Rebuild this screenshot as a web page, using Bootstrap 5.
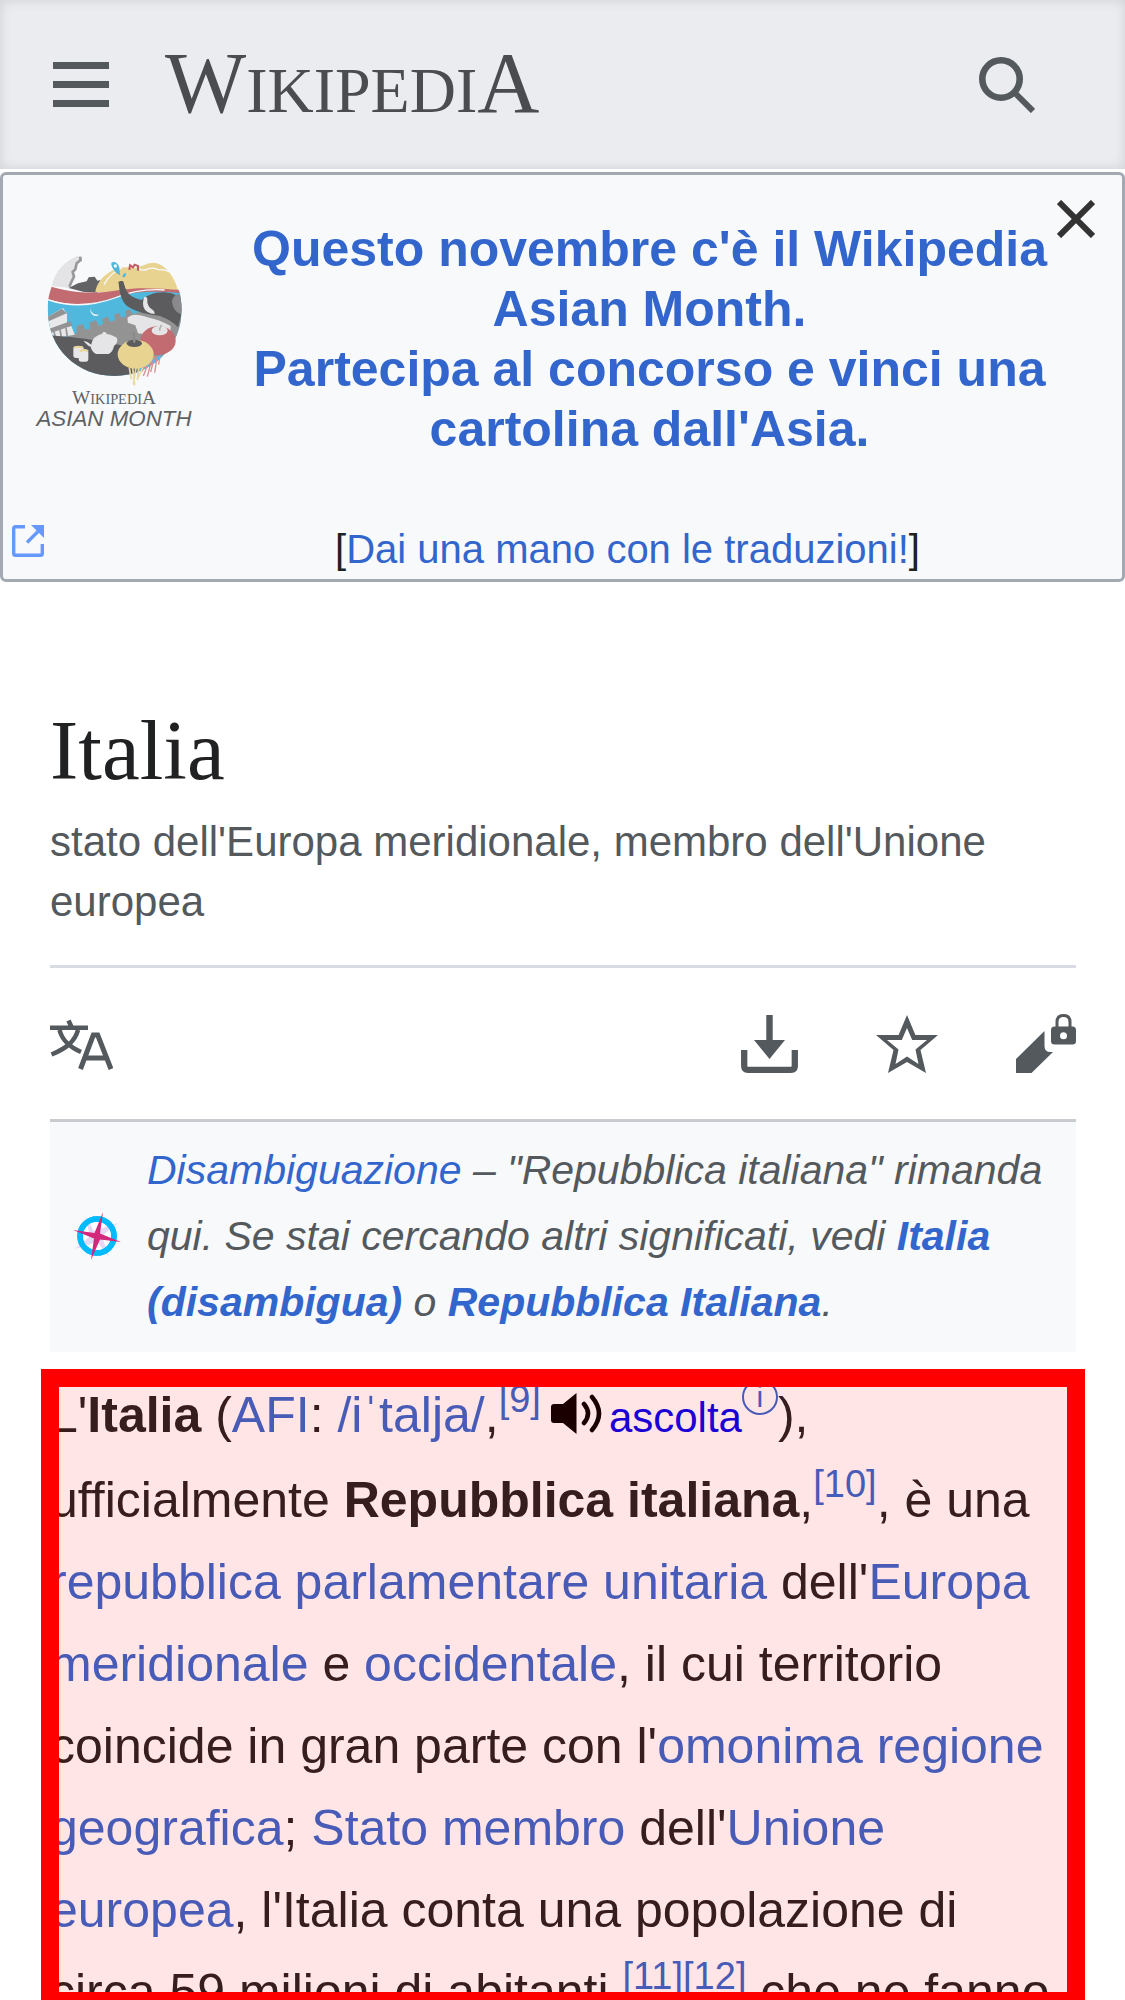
<!DOCTYPE html>
<html lang="it">
<head>
<meta charset="utf-8">
<meta name="viewport" content="width=device-width, initial-scale=1">
<title>Italia - Wikipedia</title>
<link rel="stylesheet" href="https://cdn.jsdelivr.net/npm/bootstrap@5.3.0/dist/css/bootstrap.min.css">
<style>
  body { font-family: "Liberation Sans", Arial, sans-serif; color: #202122; background: #fff; }
  a { color: #36c; text-decoration: none; }
  svg { display: block; flex: none; }
  .icon-btn { border: 0; padding: 0; background: none; color: #54595d; }
  .site-header { height: 169px; padding: 0 90px 0 53px; background: #eaecf0; box-shadow: inset 0 0 12px rgba(0,0,0,.12); }
  .wordmark { margin-left: 56px; padding-top: 4px; font-family: "Liberation Serif", serif; font-size: 86px; line-height: 100px; color: #4b4c4f; }
  .wordmark .caps { font-size: 64px; }
  .notice { margin-top: 3px; padding-top: 44px; border: 3px solid #a2a9b1; border-radius: 6px; background: #f8f9fb; }
  .notice-body { padding-right: 58px; font-size: 50px; line-height: 60px; }
  .notice-help { padding: 60px 44px 0 0; font-size: 40px; }
  .notice-close { top: 25px; right: 27px; color: #333; }
  .notice-ext { left: 9px; bottom: 22px; }
  .gutter { padding: 0 49px 0 50px; }
  .page-title { margin: 118px 0 0; font-family: "Liberation Serif", serif; font-size: 85px; line-height: 100px; font-weight: 400; }
  .tagline { margin: 12px 0 33px; font-size: 42px; line-height: 60px; color: #54595d; }
  .page-tools { height: 157px; border-top: 3px solid #dadce4; border-bottom: 3px solid #c8ccd1; }
  .tools-end { gap: 78px; }
  .hatnote { padding: 15px 30px 17px 23px; gap: 26px; background: #f8f9fb; font-size: 41px; line-height: 66px; font-style: italic; color: #54595d; }
  .lead-wrap { margin-top: 17px; padding: 5px 50px 0; min-height: 0; }
  .lead-text { font-size: 50px; line-height: 82px; }
  .lead-text sup { font-size: 38px; line-height: 0; top: 0; vertical-align: 20px; }
  .info-link { display: inline-block; width: 36px; height: 36px; border: 2px solid #36c; border-radius: 50%; vertical-align: 25px; font-size: 30px; line-height: 32px; text-align: center; }
  .listen { font-size: 42px; color: #00e; }
  .speaker { display: inline-block; vertical-align: -2px; margin: 0 7px 0 10px; }
  .frame { top: 0; left: 41px; right: 40px; bottom: -10px; border: 18px solid #f00; background: rgba(255,0,0,.1); background-clip: padding-box; pointer-events: none; }
</style>
</head>
<body>
<div class="vh-100 d-flex flex-column overflow-hidden">
  <header class="site-header d-flex align-items-center flex-shrink-0">
    <button class="icon-btn" aria-label="Menu">
      <svg width="56" height="45" viewBox="0 0 56 45" fill="currentColor"><path d="M0 0h56v7H0zM0 19h56v7H0zM0 38h56v7H0z"/></svg>
    </button>
    <a class="wordmark" href="#">W<span class="caps">IKIPEDI</span>A</a>
    <button class="icon-btn ms-auto" aria-label="Cerca">
      <svg width="56" height="56" viewBox="0 0 56 56" fill="none" stroke="currentColor"><circle cx="22" cy="22" r="18.7" stroke-width="6.6"/><path d="M35 35l19 19" stroke-width="6"/></svg>
    </button>
  </header>

  <section class="notice position-relative d-flex flex-shrink-0">
    <svg width="232" height="232" viewBox="9 -3 696 696" role="img" aria-label="Wikipedia Asian Month">
      <defs><clipPath id="globe"><path d="M240 108C180 130 143 200 143 268c0 120 90 200 200 200 118 0 202-90 202-200 0-30-6-54-14-72-16-32-44-68-74-68z"/></clipPath></defs>
      <path d="M155 198c10-44 40-76 78-90l14 2-6 16-12 4-4 20-8 6 4 16-6 14-6 18z" fill="#e4e4e6"/>
      <path d="M240 110l2 10-12 10-4 18-8 8 4 14-8 16-6 14" fill="none" stroke="#98989a" stroke-width="8"/>
      <path d="M206 204l28-14 26-6 6-12 18-2 8 12 10-2-8 20-2 18-40-2z" fill="#636365"/>
      <path d="M286 216c8-46 56-78 102-74 24 8 46-14 74-14 36 4 62 44 72 82l-120 6z" fill="#e8d390"/>
      <path d="M312 194c16-30 34-42 54-50M418 146c16 16 28-12 54 2 20 4 24-2 34 8" fill="none" stroke="#f8f9fb" stroke-width="4"/>
      <path d="M388 150l2-14 9 6 5-8 10 4 0 14" fill="none" stroke="#c65b63" stroke-width="6"/>
      <path d="M334 128c10-6 22 2 24 16l2 22c-14-8-28-24-26-38z" fill="#50b8dc"/><circle cx="346" cy="138" r="5" fill="#f8f9fb"/><path d="M378 158c0 12-4 14-10 14-2-8 4-12 10-14z" fill="#50b8dc"/>
      <g clip-path="url(#globe)">
        <path d="M140 236c70 30 132 22 200-4 60-20 110-26 210-18v260H140z" fill="#50b8dc"/>
        <path d="M140 196c84 26 148 26 220 14 60-10 120-4 190 0v10c-90-8-150-6-200 10-74 26-144 30-210 6z" fill="#c26b70"/>
        <path d="M140 238c70 24 134 22 204-4 50-20 96-28 150-24" fill="none" stroke="#f8f9fb" stroke-width="4"/>
        <path d="M278 250c-14 18-4 36 20 34-18 14-38-10-20-34z" fill="#f0f1f4"/>
        <path d="M200 350l30-10 0-22 18-6 8 18 14-4-2-18 20-8 8 18 14-6-4-16 18-6 6 16 16-6-4-16 16-6 6 16 14-6-2-16 14-4 8 14 30-8 130 20v90l-200 60-160-60z" fill="#939394"/>
        <path d="M143 290l46-26 12 18v32l-50 12z" fill="#e8e8ea"/><path d="M140 292l46-26 14 14-54 24zM144 328l66-24 8 14-66 24z" fill="#939394"/><path d="M154 338l60-20 10 26-60 10z" fill="#e8e8ea"/><path d="M166 352l-4-18M184 352l-4-24M202 352l-4-28" stroke="#939394" stroke-width="5"/>
        <path d="M140 346c70 4 120 10 180 22l80 14 20 100H180z" fill="#5c5c5e"/>
        <path d="M382 294c16-16 40-8 60-2 24 6 46 12 70 26l-2 36-96-14-8-24-22-8z" fill="#e5e5e7"/>
        <path d="M356 186c8-6 14-4 16 6 8 34 26 40 52 48 22-18 50-26 78-22 30 2 46 20 46 50l-14 54c-14-16-32-26-54-34-38-6-66-10-96-28-20-14-26-42-28-74z" fill="#5c5c5e"/>
        <path d="M516 244c4-20 18-26 34-18v58c-20-2-32-18-34-40z" fill="#8a8a8c"/>
        <path d="M432 232c-8 28 0 48 32 50 2-16-24-12-22-44 0-8-6-10-10-6z" fill="#e5e5e7"/>
      </g>
      <path d="M355 186l14-3 8 28-12 6z" fill="#5c5c5e"/>
      <path d="M250 362l12 4 12 8c2-18 14-28 32-32 2-8 12-8 14 0 12 2 20 6 24 8 10 0 12 18-2 28-2 12-8 20-16 24h-38c-10-6-14-14-16-22-8-2-14-10-22-18z" fill="#e5e5e7"/>
      <rect x="220" y="378" width="31" height="36" rx="8" fill="#e8e8ea"/><rect x="236" y="388" width="29" height="37" rx="8" fill="#e8e8ea"/><path d="M222 384q14-8 26 0M240 394q12-8 24 0" fill="none" stroke="#e8d390" stroke-width="6"/>
      <path d="M480 408l-4 26M472 408l-8 50M464 408l-12 48M458 408l-16 62M452 410l-22 58M446 414l-20 40" fill="none" stroke="#d98e92" stroke-width="4"/>
      <path d="M388 444l6 34M398 444l6 52M408 444l-8 50M416 444l-4 36M428 444l-14 30" fill="none" stroke="#ead9a3" stroke-width="5"/>
      <ellipse cx="474" cy="362" rx="53" ry="43" fill="#c26b70"/><ellipse cx="479" cy="332" rx="24" ry="14" fill="#e5e5e7"/><path d="M480 332c-4-10 4-8 4-18" fill="none" stroke="#aaa" stroke-width="4"/>
      <ellipse cx="407" cy="403" rx="54" ry="43" fill="#e8d390"/><ellipse cx="403" cy="370" rx="23" ry="11" fill="#5c5c5e"/><path d="M402 368c4-12-4-16 0-32" fill="none" stroke="#8a8a8c" stroke-width="7"/>
      <text x="342" y="552" text-anchor="middle" font-family="Liberation Serif, serif" font-size="58" fill="#606163">W<tspan font-size="43">IKIPEDI</tspan>A</text>
      <text x="342" y="619" text-anchor="middle" font-family="Liberation Sans, sans-serif" font-style="italic" font-size="67" fill="#606163">ASIAN MONTH</text>
    </svg>
    <div class="notice-body flex-grow-1 text-center">
      <a class="fw-bold" href="#">Questo novembre c'è il Wikipedia Asian Month.<br>Partecipa al concorso e vinci una cartolina dall'Asia.</a>
      <div class="notice-help">[<a href="#">Dai una mano con le traduzioni!</a>]</div>
    </div>
    <button class="icon-btn notice-close position-absolute" aria-label="Chiudi">
      <svg width="38" height="38" viewBox="0 0 38 38" fill="none" stroke="currentColor" stroke-width="6"><path d="M2 2l34 34M36 2L2 36"/></svg>
    </button>
    <a class="notice-ext position-absolute" href="#" aria-label="Collegamento esterno">
      <svg width="32" height="32" viewBox="0 0 32 32" fill="none" stroke="#69f" stroke-width="3.4"><path d="M13 1.700H3.500q-1.800 0-1.800 1.800v25q0 1.800 1.800 1.800h25q1.800 0 1.800-1.800V19M15 17.500L26 6.500"/><path d="M19 0h13v13z" fill="#69f" stroke="none"/></svg>
    </a>
  </section>

  <div class="gutter flex-shrink-0">
    <h1 class="page-title">Italia</h1>
    <p class="tagline">stato dell'Europa meridionale, membro dell'Unione europea</p>
    <nav class="page-tools d-flex align-items-center justify-content-between">
      <button class="icon-btn" aria-label="Lingue">
        <svg width="63" height="56" viewBox="0 0 63 56" fill="none" stroke="currentColor" stroke-width="4.600"><path d="M18.500 4.500l3 6.500M0 11.800h38M9.500 14c3 11 10 17 21.500 22M28 14C25 25 17 32 1.500 38.500"/><path d="M30.500 53L43.300 19h4.400L61 53M35.500 42h20" stroke-width="5"/></svg>
      </button>
      <div class="tools-end d-flex align-items-center">
        <button class="icon-btn" aria-label="Scarica">
          <svg width="57" height="60" viewBox="0 0 57 60"><path d="M3.200 36v16q0 3.800 3.800 3.800h43q3.800 0 3.800-3.800V36" fill="none" stroke="currentColor" stroke-width="6.300"/><path d="M25.300 1h6.400v25H44L28.500 45 13 26h12.300z" fill="currentColor"/></svg>
        </button>
        <button class="icon-btn" aria-label="Segui">
          <svg width="62" height="60" viewBox="0 0 62 60" fill="currentColor" fill-rule="evenodd"><path d="M31 1l8.400 20H62L44.500 36l5.500 23-19-11-19 11 5.500-23L0 21h22.600zM31 14l-5.200 12H11l11.500 9.500L19.500 50 31 42.500 42.500 50l-3-14.500L51 26H36.200z"/></svg>
        </button>
        <button class="icon-btn" aria-label="Modifica">
          <svg width="60" height="60" viewBox="0 0 60 60" fill="currentColor"><path d="M0 45l28.500-28v15q0 6 6 6H37L15.500 59H0z"/><path d="M35 16q0-3.500 3.500-3.500h18q3.500 0 3.500 3.500v11q0 3.500-3.500 3.500h-18Q35 30.500 35 27zm12.500 2.300a3.500 3.500 0 1 0 0 7 3.500 3.500 0 1 0 0-7z" fill-rule="evenodd"/><path d="M41 14V8q0-6.500 6.500-6.500T54 8v6" fill="none" stroke="currentColor" stroke-width="3"/></svg>
        </button>
      </div>
    </nav>
    <div class="hatnote d-flex align-items-center">
      <svg width="48" height="48" viewBox="0 0 48 48"><circle cx="24" cy="24" r="17" fill="#fff" stroke="#0bf" stroke-width="5.500"/><path d="M12 4l9 15L45 11 29 24l7 21-12-15L2 37l15-13z" fill="#dcc8f0" opacity=".7"/><circle cx="24" cy="24" r="17" fill="none" stroke="#0bf" stroke-width="5.500"/><path d="M30 0l-3 21.500L48 30l-21-2.500L18 48l3-21.500L0 18l21.500 3z" fill="#d4287c"/></svg>
      <div><a href="#">Disambiguazione</a> – "Repubblica italiana" rimanda qui. Se stai cercando altri significati, vedi <a class="fw-bold" href="#">Italia (disambigua)</a> o <a class="fw-bold" href="#">Repubblica Italiana</a>.</div>
    </div>
  </div>

  <main class="lead-wrap position-relative flex-grow-1 overflow-hidden">
    <p class="lead-text m-0">L'<b>Italia</b> (<a href="#">AFI</a>: <a href="#">/iˈtalja/</a>,<sup><a href="#">[9]</a></sup><svg class="speaker" width="51" height="41" viewBox="0 0 51 41"><path d="M0 14q0-3 3-3h9L25.500 0v41L12 30H3q-3 0-3-3z"/><path d="M33 11q8 9.500 0 19M41 4q14 16.500 0 33" fill="none" stroke="#000" stroke-width="4.500" stroke-linecap="round"/></svg><a class="listen" href="#">ascolta</a><a class="info-link" href="#">i</a>), ufficialmente <b>Repubblica italiana</b>,<sup><a href="#">[10]</a></sup>, è una <a href="#">repubblica parlamentare unitaria</a> dell'<a href="#">Europa meridionale</a> e <a href="#">occidentale</a>, il cui territorio coincide in gran parte con l'<a href="#">omonima regione geografica</a>; <a href="#">Stato membro</a> dell'<a href="#">Unione europea</a>, l'Italia conta una popolazione di circa 59 milioni di abitanti,<sup><a href="#">[11]</a><a href="#">[12]</a></sup> che ne fanno</p>
    <div class="frame position-absolute"></div>
  </main>
</div>
<script src="https://cdn.jsdelivr.net/npm/bootstrap@5.3.0/dist/js/bootstrap.bundle.min.js"></script>
</body>
</html>
